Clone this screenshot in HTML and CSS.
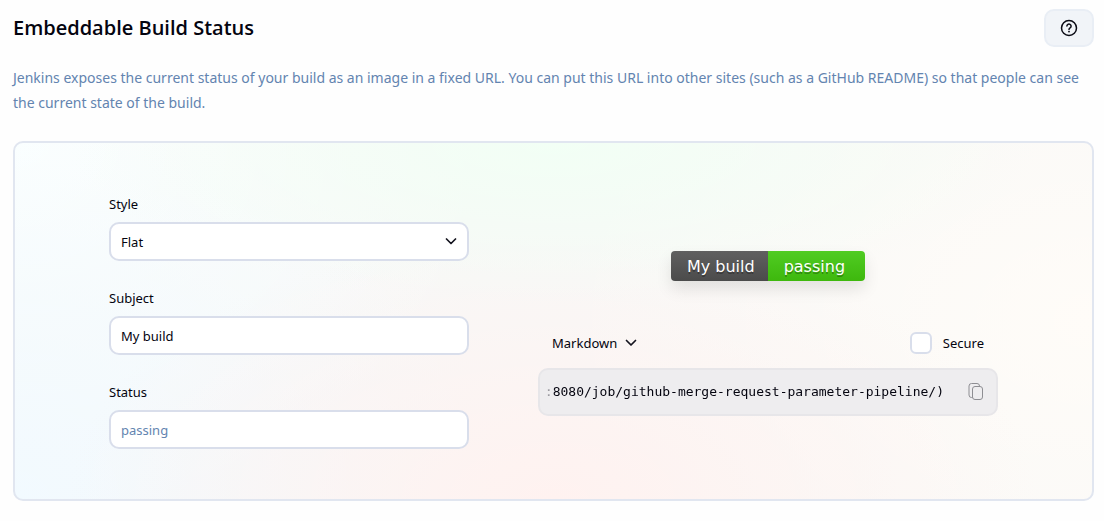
FILE: index.html
```html
<!DOCTYPE html>
<html lang="en">
<head>
<meta charset="utf-8">
<meta name="viewport" content="width=device-width, initial-scale=1">
<title>Embeddable Build Status</title>
<link rel="stylesheet" href="styles.css">
</head>
<body>
<main class="page">
  <header class="app-bar">
    <h1 class="app-bar__title">Embeddable Build Status</h1>
    <button class="help-button" type="button" aria-label="Help">
      <svg class="help-button__icon" viewBox="0 0 18 18" aria-hidden="true">
        <circle cx="9" cy="9" r="7.5"/>
        <path d="M6.9 7.1a2.1 2.1 0 1 1 3.2 1.8c-.7.45-1.1.8-1.1 1.5"/>
        <circle class="help-button__dot" cx="9" cy="12.6" r=".9"/>
      </svg>
    </button>
  </header>
  <p class="description">Jenkins exposes the current status of your build as an image in a fixed URL. You can put this URL into other sites (such as a GitHub README) so that people can see the current state of the build.</p>

  <section class="card">
    <form class="fields">
      <div class="field">
        <label class="field__label" for="style">Style</label>
        <div class="dropdown">
          <select class="field__input" id="style"><option>Flat</option></select>
          <svg class="chevron" viewBox="0 0 12 8" aria-hidden="true"><path d="M1.5 1 6 5.500 10.500 1"/></svg>
        </div>
      </div>
      <div class="field">
        <label class="field__label" for="subject">Subject</label>
        <input class="field__input" id="subject" type="text" value="My build">
      </div>
      <div class="field">
        <label class="field__label" for="status">Status</label>
        <input class="field__input" id="status" type="text" placeholder="passing">
      </div>
    </form>

    <div class="preview">
      <div class="badge">
        <span class="badge__part badge__part--subject">My build</span>
        <span class="badge__part badge__part--status">passing</span>
      </div>
      <div class="options">
        <div class="dropdown dropdown--inline">
          <select class="format" aria-label="Format"><option>Markdown</option></select>
          <svg class="chevron" viewBox="0 0 12 8" aria-hidden="true"><path d="M1.5 1.500 6 6 10.500 1.500"/></svg>
        </div>
        <label class="secure"><input class="secure__box" type="checkbox">Secure</label>
      </div>
      <div class="snippet">
        <code class="snippet__code">:8080/job/github-merge-request-parameter-pipeline/)</code>
        <button class="copy-button" type="button" aria-label="Copy">
          <svg class="copy-button__icon" viewBox="0 0 16 18" aria-hidden="true">
            <rect x="4.500" y="3.500" width="10" height="13" rx="2.500"/>
            <path d="M4.500 14.500H3.500a2.500 2.500 0 0 1-2.500-2.500V3a2.500 2.500 0 0 1 2.500-2.500h5.500A2.500 2.500 0 0 1 11.500 3v.5"/>
          </svg>
        </button>
      </div>
    </div>
  </section>
</main>
</body>
</html>
```
FILE: styles.css
```css
*,
*::before,
*::after {
  box-sizing: border-box;
}

body {
  margin: 0;
  background: #fefefe;
  color: #04040f;
  font-family: "Noto Sans", "Open Sans", sans-serif;
  font-size: 13px;
  line-height: 20px;
}

button,
input,
select {
  margin: 0;
  color: inherit;
  font: inherit;
}

.page {
  padding: 9px 10px 20px 13px;
}

.app-bar {
  display: flex;
  align-items: center;
  justify-content: space-between;
}

.app-bar__title {
  margin: 0;
  font-family: "Open Sans", sans-serif;
  font-size: 20px;
  font-weight: 600;
  line-height: 28px;
}

.help-button {
  display: grid;
  place-items: center;
  width: 50px;
  height: 38px;
  padding: 0;
  border: 2px solid #e9eef5;
  border-radius: 10px;
  background: #f1f4f8;
}

.help-button__icon {
  width: 18px;
  height: 18px;
  fill: none;
  stroke: #0a0a14;
  stroke-width: 1.5;
  stroke-linecap: round;
}

.help-button__dot {
  fill: #0a0a14;
  stroke: none;
}

.description {
  margin: 18px 0 26px;
  color: #6384b0;
  font-size: 14px;
  line-height: 25px;
}

.card {
  display: grid;
  grid-template-columns: minmax(0, 360px) minmax(0, 460px);
  gap: 69px;
  align-items: center;
  justify-content: center;
  padding: 51px 20px 50px;
  border: 2px solid #e1e6f0;
  border-radius: 10px;
  background:
    radial-gradient(ellipse 45% 45% at 50% 0%, #f2fff5, transparent),
    radial-gradient(ellipse 45% 75% at 50% 100%, #fff2f0, transparent),
    radial-gradient(ellipse 45% 110% at 0% 100%, #f2faff, transparent),
    radial-gradient(ellipse 45% 110% at 0% 0%, #fbffff, transparent),
    radial-gradient(ellipse 50% 110% at 100% 50%, #fffcf8, transparent),
    #f8f8f7;
}

.fields {
  display: grid;
  gap: 27px;
}

.field {
  display: grid;
  gap: 8px;
}

.field__input {
  width: 100%;
  height: 39px;
  padding: 0 10px;
  border: 2px solid #d9deeb;
  border-radius: 10px;
  background: #fff;
  appearance: none;
}

.field__input::placeholder {
  color: #6384b0;
  opacity: 1;
}

.dropdown {
  display: grid;
  align-items: center;
}

.dropdown > * {
  grid-area: 1 / 1;
}

.chevron {
  width: 12px;
  height: 8px;
  margin-right: 12px;
  justify-self: end;
  fill: none;
  stroke: #14141f;
  stroke-width: 1.7;
  stroke-linecap: round;
  stroke-linejoin: round;
  pointer-events: none;
}

.preview {
  display: flex;
  flex-direction: column;
  padding-top: 24px;
}

.badge {
  display: flex;
  align-self: center;
  height: 30px;
  margin-bottom: 51px;
  border-radius: 4px;
  overflow: hidden;
  box-shadow: 0 8px 16px rgb(0 0 0 / 10%);
  color: #fff;
  font-family: "DejaVu Sans", sans-serif;
  font-size: 16px;
  line-height: 32px;
  text-shadow: 0 2px 0 rgb(1 1 1 / 30%);
}

.badge__part {
  padding: 0 16px;
}

.badge__part--subject {
  padding-right: 13px;
  background: linear-gradient(#606060, #4b4b4b);
}

.badge__part--status {
  padding-right: 20px;
  background: linear-gradient(#50cc23, #3eb80d);
}

.options {
  display: flex;
  align-items: center;
  justify-content: space-between;
  height: 22px;
  margin: 0 14px 14px;
}

.format {
  padding: 0 19px 0 0;
  border: 0;
  background: transparent;
  appearance: none;
}

.dropdown--inline .chevron {
  margin-right: 0;
}

.secure {
  display: flex;
  align-items: center;
  gap: 11px;
}

.secure__box {
  width: 22px;
  height: 22px;
  margin: 0;
  border: 2px solid #d9deeb;
  border-radius: 6px;
  background: #fff;
  appearance: none;
}

.snippet {
  display: flex;
  align-items: center;
  justify-content: flex-end;
  height: 48px;
  padding: 0 12px 0 2px;
  border: 2px solid #e7e6e9;
  border-radius: 10px;
  background: #eeedef;
}

.snippet__code {
  font-family: "DejaVu Sans Mono", monospace;
  font-size: 13px;
  line-height: 20px;
  white-space: nowrap;
  mask-image: linear-gradient(to right, transparent, #000 10px);
}

.copy-button {
  display: grid;
  place-items: center;
  width: 40px;
  height: 32px;
  padding: 0 0 0 24px;
  border: 0;
  background: transparent;
}

.copy-button__icon {
  width: 16px;
  height: 18px;
  fill: none;
  stroke: #8e8e93;
  stroke-width: 1;
}
```
